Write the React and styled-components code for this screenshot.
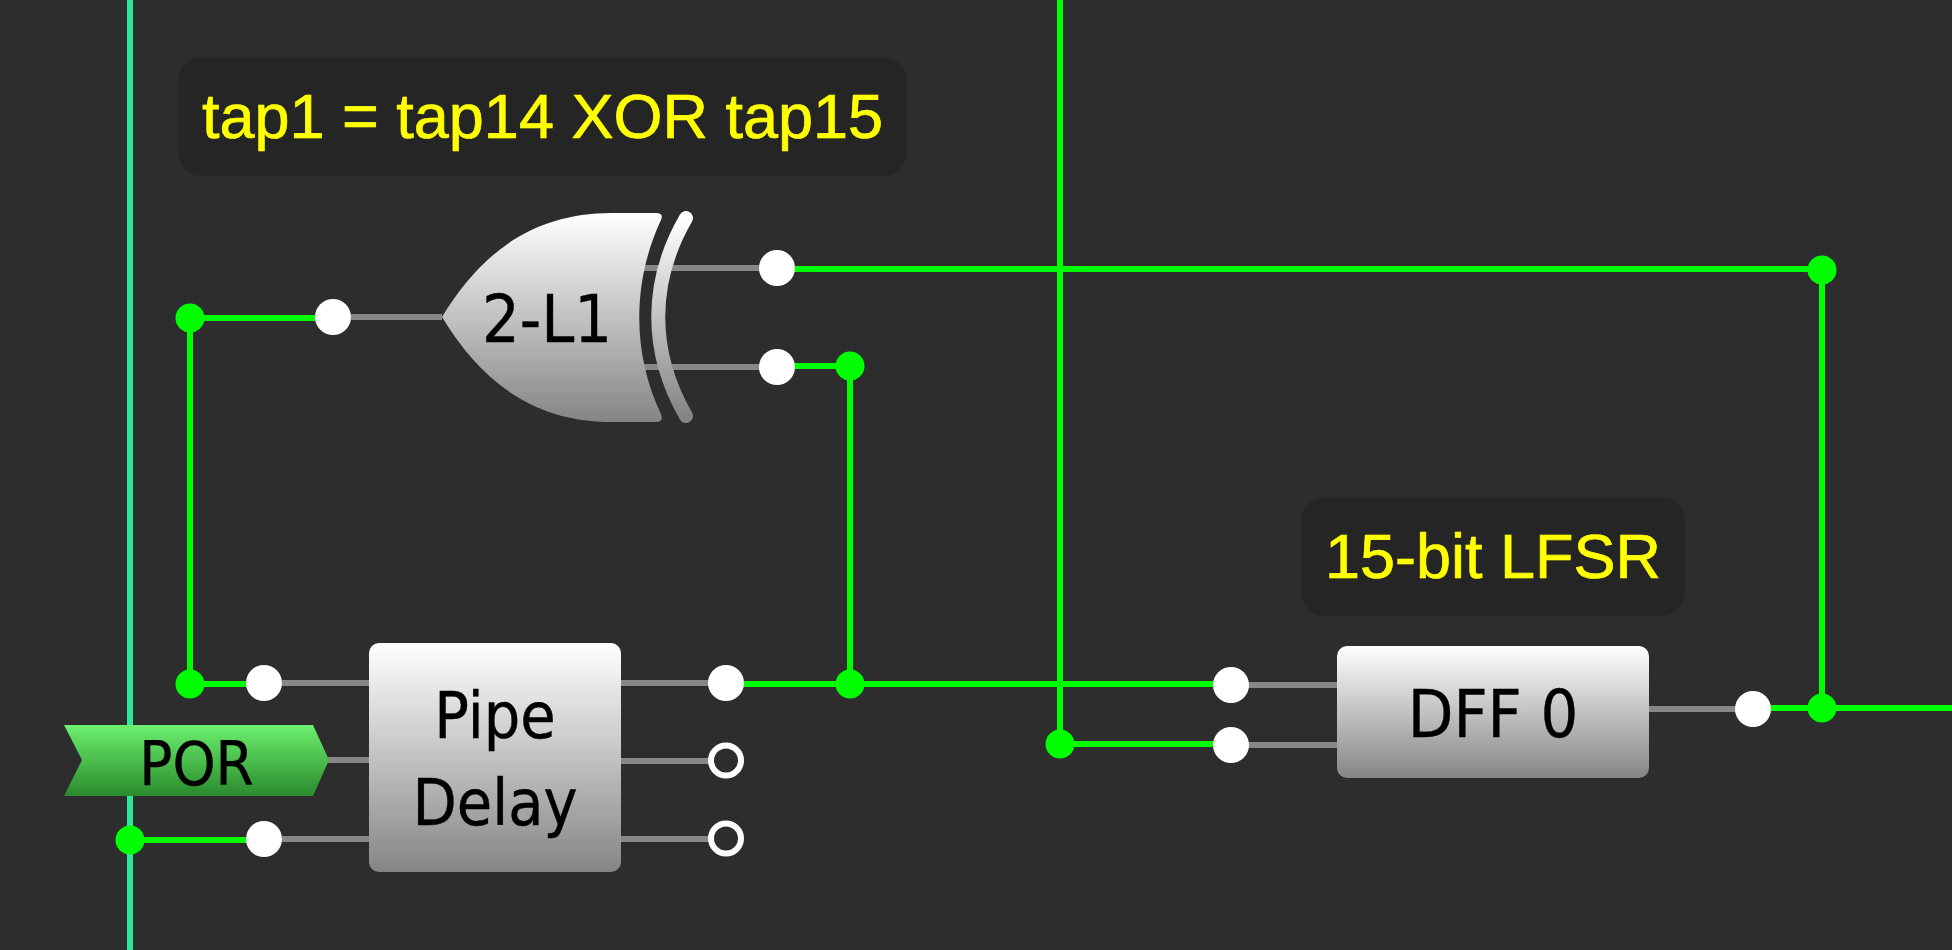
import React from "react";
import styled, { createGlobalStyle } from "styled-components";

const GlobalStyle = createGlobalStyle`
    html, body {
        margin: 0;
        padding: 0;
        background-color: #2d2d2d;
        overflow: hidden;
    }
`;

const Canvas = styled.div`
    position: relative;
    width: 1952px;
    height: 950px;
    background-color: #2d2d2d;
    overflow: hidden;
    font-family: "DejaVu Sans Condensed", "DejaVu Sans", sans-serif;
    font-stretch: condensed;
`;

const WireLayer = styled.svg`
    position: absolute;
    left: 0;
    top: 0;
`;

const Note = styled.div`
    position: absolute;
    left: ${(p) => p.$x}px;
    top: ${(p) => p.$y}px;
    width: ${(p) => p.$w}px;
    height: 119px;
    padding-bottom: 2px;
    display: flex;
    align-items: center;
    justify-content: center;
    box-sizing: border-box;
    background-color: #252525;
    border-radius: 24px;
    color: #ffff00;
    font-family: "Liberation Sans", Arial, sans-serif;
    font-stretch: normal;
    font-size: 63px;
    -webkit-text-stroke: 0.7px #ffff00;
    white-space: nowrap;
`;

const Chip = styled.div`
    position: absolute;
    left: ${(p) => p.$x}px;
    top: ${(p) => p.$y}px;
    width: ${(p) => p.$w}px;
    height: ${(p) => p.$h}px;
    padding-top: 4px;
    display: flex;
    flex-direction: column;
    align-items: center;
    justify-content: center;
    box-sizing: border-box;
    border-radius: 10px;
    background: linear-gradient(#ffffff, #858585);
    color: #000;
    font-size: ${(p) => p.$size}px;
    line-height: 87px;
    -webkit-text-stroke: 0.4px #000;
    white-space: nowrap;
`;

const GateLabel = styled.span`
    position: absolute;
    left: ${(p) => p.$x}px;
    top: ${(p) => p.$y}px;
    width: ${(p) => p.$w}px;
    color: #000;
    font-size: ${(p) => p.$size}px;
    line-height: 1;
    text-align: center;
    -webkit-text-stroke: 0.4px #000;
    white-space: nowrap;
`;

const GREY = "#878787";
const GREEN = "#00ff00";

const greyWires = [
  "M351 317H442",
  "M640 268H777",
  "M640 367H777",
  "M282 683H369",
  "M328 760H369",
  "M282 839H369",
  "M621 683H726",
  "M621 761H726",
  "M621 839H726",
  "M1231 685H1337",
  "M1231 745H1337",
  "M1649 709H1753",
];

const greenWires = [
  "M1060 0V744H1231",
  "M777 269H1822V708",
  "M1753 708H1952",
  "M777 366H850V684",
  "M726 684H1231",
  "M333 318H190V684H264",
  "M130 840H264",
];

const junctions = [
  [190, 318],
  [190, 684],
  [130, 840],
  [850, 366],
  [850, 684],
  [1060, 744],
  [1822, 270],
  [1822, 708],
];

const pins = [
  [333, 317],
  [777, 268],
  [777, 367],
  [264, 683],
  [264, 839],
  [726, 683],
  [1231, 685],
  [1231, 745],
  [1753, 709],
];

const openPins = [
  [726, 760.5],
  [726, 838.5],
];

const App = () => (
  <Canvas>
    <GlobalStyle />
    <WireLayer width="1952" height="950" viewBox="0 0 1952 950">
      <defs>
        <linearGradient id="gate" x1="0" y1="0" x2="0" y2="1">
          <stop offset="0" stopColor="#ffffff" />
          <stop offset="1" stopColor="#858585" />
        </linearGradient>
        <linearGradient id="por" x1="0" y1="0" x2="0" y2="1">
          <stop offset="0" stopColor="#6cf06e" />
          <stop offset="1" stopColor="#2a8a2c" />
        </linearGradient>
      </defs>

      <path d="M130 0V950" stroke="#2ee89a" strokeWidth="6" fill="none" />

      {greyWires.map((d) => (
        <path key={d} d={d} stroke={GREY} strokeWidth="6" fill="none" />
      ))}
      {greenWires.map((d) => (
        <path key={d} d={d} stroke={GREEN} strokeWidth="6" fill="none" />
      ))}

      <path
        d="M442 317C478 258 528 213 612 213H656Q664 213 661 220C632 282 632 353 661 414Q664 422 656 422H612C528 422 478 376 442 317Z"
        fill="url(#gate)"
      />
      <path
        d="M686 218C649 282 649 352 686 416"
        stroke="url(#gate)"
        strokeWidth="14"
        strokeLinecap="round"
        fill="none"
      />
      <polygon points="64,725 313,725 329,760 313,796 64,796 82,760" fill="url(#por)" />

      {junctions.map(([cx, cy]) => (
        <circle key={`${cx}-${cy}`} cx={cx} cy={cy} r="14.5" fill={GREEN} />
      ))}
      {pins.map(([cx, cy]) => (
        <circle key={`${cx}-${cy}`} cx={cx} cy={cy} r="18" fill="#ffffff" />
      ))}
      {openPins.map(([cx, cy]) => (
        <circle key={`${cx}-${cy}`} cx={cx} cy={cy} r="15" fill="#2d2d2d" stroke="#ffffff" strokeWidth="6" />
      ))}
    </WireLayer>

    <Note $x={178} $y={57} $w={729}>tap1 = tap14 XOR tap15</Note>
    <Note $x={1301} $y={497} $w={384}>15-bit LFSR</Note>

    <GateLabel $x={442} $y={287} $w={210} $size={66}>2-L1</GateLabel>
    <GateLabel $x={64} $y={733} $w={265} $size={61}>POR</GateLabel>

    <Chip $x={369} $y={643} $w={252} $h={229} $size={64}>
      <span>Pipe</span>
      <span>Delay</span>
    </Chip>
    <Chip $x={1337} $y={646} $w={312} $h={132} $size={66}>
      DFF 0
    </Chip>
  </Canvas>
);

export default App;
